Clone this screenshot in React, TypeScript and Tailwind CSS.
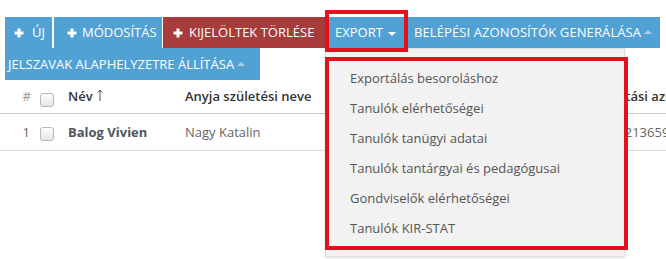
import React from 'react';

const PlusIcon = () => (
  <svg width="10" height="10" viewBox="0 0 10 10" className="shrink-0">
    <path d="M5 0.5v9M0.5 5h9" stroke="white" strokeWidth="3" />
  </svg>
);

const CaretDown = () => (
  <span className="ml-[5px] inline-block w-0 h-0 border-x-[4px] border-x-transparent border-t-[4px] border-t-white mt-[3px]" />
);

const CaretUp = () => (
  <span className="ml-[3px] inline-block w-0 h-0 border-x-[4px] border-x-transparent border-b-[4px] border-b-white/50 mb-[1px]" />
);

const SortArrow = () => (
  <svg width="6" height="12" viewBox="0 0 6 12" className="ml-[4px] -mt-[3px]">
    <path d="M3 1v11M0.8 3.5L3 1l2.2 2.5" stroke="#555" strokeWidth="1" fill="none" />
  </svg>
);

const Checkbox = () => (
  <span className="block w-[14px] h-[14px] rounded-[3px] border border-[#b9b9b9] bg-gradient-to-b from-white to-[#e4e4e4]" />
);

const menuItems = [
  'Exportálás besoroláshoz',
  'Tanulók elérhetőségei',
  'Tanulók tanügyi adatai',
  'Tanulók tantárgyai és pedagógusai',
  'Gondviselők elérhetőségei',
  'Tanulók KIR-STAT',
];

export default function App() {
  return (
    <div className="relative w-[666px] h-[259px] overflow-hidden bg-white font-['Open_Sans',sans-serif] text-[13px] leading-none">
      {/* toolbar */}
      <div className="pt-[17px] pl-[5px] flex flex-wrap w-[666px] text-white">
        <button className="uppercase h-[31px] w-[47px] pl-[9px] flex items-center gap-[8px] bg-[#51a1d5]">
          <PlusIcon />
          <span>Új</span>
        </button>
        <button className="uppercase ml-[2px] h-[31px] w-[108px] pl-[13px] flex items-center gap-[5px] bg-[#51a1d5]">
          <PlusIcon />
          <span>Módosítás</span>
        </button>
        <button className="uppercase ml-[1px] h-[31px] w-[162px] pl-[10px] flex items-center gap-[6px] bg-[#a83b3b]">
          <PlusIcon />
          <span>Kijelöltek törlése</span>
        </button>
        <button className="uppercase h-[31px] w-[82px] pl-[10px] flex items-center bg-[#51a1d5]">
          <span>Export</span>
          <CaretDown />
        </button>
        <button className="uppercase h-[31px] w-[253px] pl-[7px] flex items-center bg-[#51a1d5] whitespace-nowrap">
          <span className="tracking-[0.1px]">Belépési azonosítók generálása</span>
          <CaretUp />
        </button>
        <button className="uppercase h-[32px] w-[255px] pl-[3px] flex items-center bg-[#51a1d5] whitespace-nowrap">
          <span>Jelszavak alaphelyzetre állítása</span>
          <CaretUp />
        </button>
      </div>

      {/* table */}
      <div className="w-[760px]">
        <div className="h-[34px] flex items-center border-b-[1.5px] border-[#c5cad3] font-semibold text-[#333]">
          <span className="w-[32px] text-right pr-[1px] text-[#9a9a9a] font-normal">#</span>
          <span className="ml-[8px] mt-[6px]"><Checkbox /></span>
          <span className="ml-[14px] w-[117px] flex items-center">Név<SortArrow /></span>
          <span className="w-[410px]">Anyja születési neve</span>
          <span>Oktatási azonosító</span>
        </div>
        <div className="h-[37px] flex items-center border-b border-[#dcdcdc] text-[#666]">
          <span className="w-[31px] text-right pr-[1px]">1</span>
          <span className="ml-[9px] mt-[3px]"><Checkbox /></span>
          <span className="ml-[14px] w-[117px] font-bold text-[#50555f]">Balog Vivien</span>
          <span className="w-[410px]">Nagy Katalin</span>
          <span>7345213659</span>
        </div>
      </div>

      {/* export dropdown */}
      <div className="absolute left-[325px] top-[48px] w-[300px] h-[209px] bg-[#f2f2f2] border border-[#e0e0e0] shadow-sm pt-[14px]">
        {menuItems.map((item) => (
          <div key={item} className="h-[30px] flex items-center pl-[24px] text-[#555]">
            {item}
          </div>
        ))}
      </div>

      {/* annotation boxes */}
      <div className="absolute left-[325px] top-[10px] w-[83px] h-[42px] border-[4px] border-[#e2111d]" />
      <div className="absolute left-[325px] top-[57px] w-[303px] h-[193px] border-[4px] border-[#e2111d]" />
    </div>
  );
}
